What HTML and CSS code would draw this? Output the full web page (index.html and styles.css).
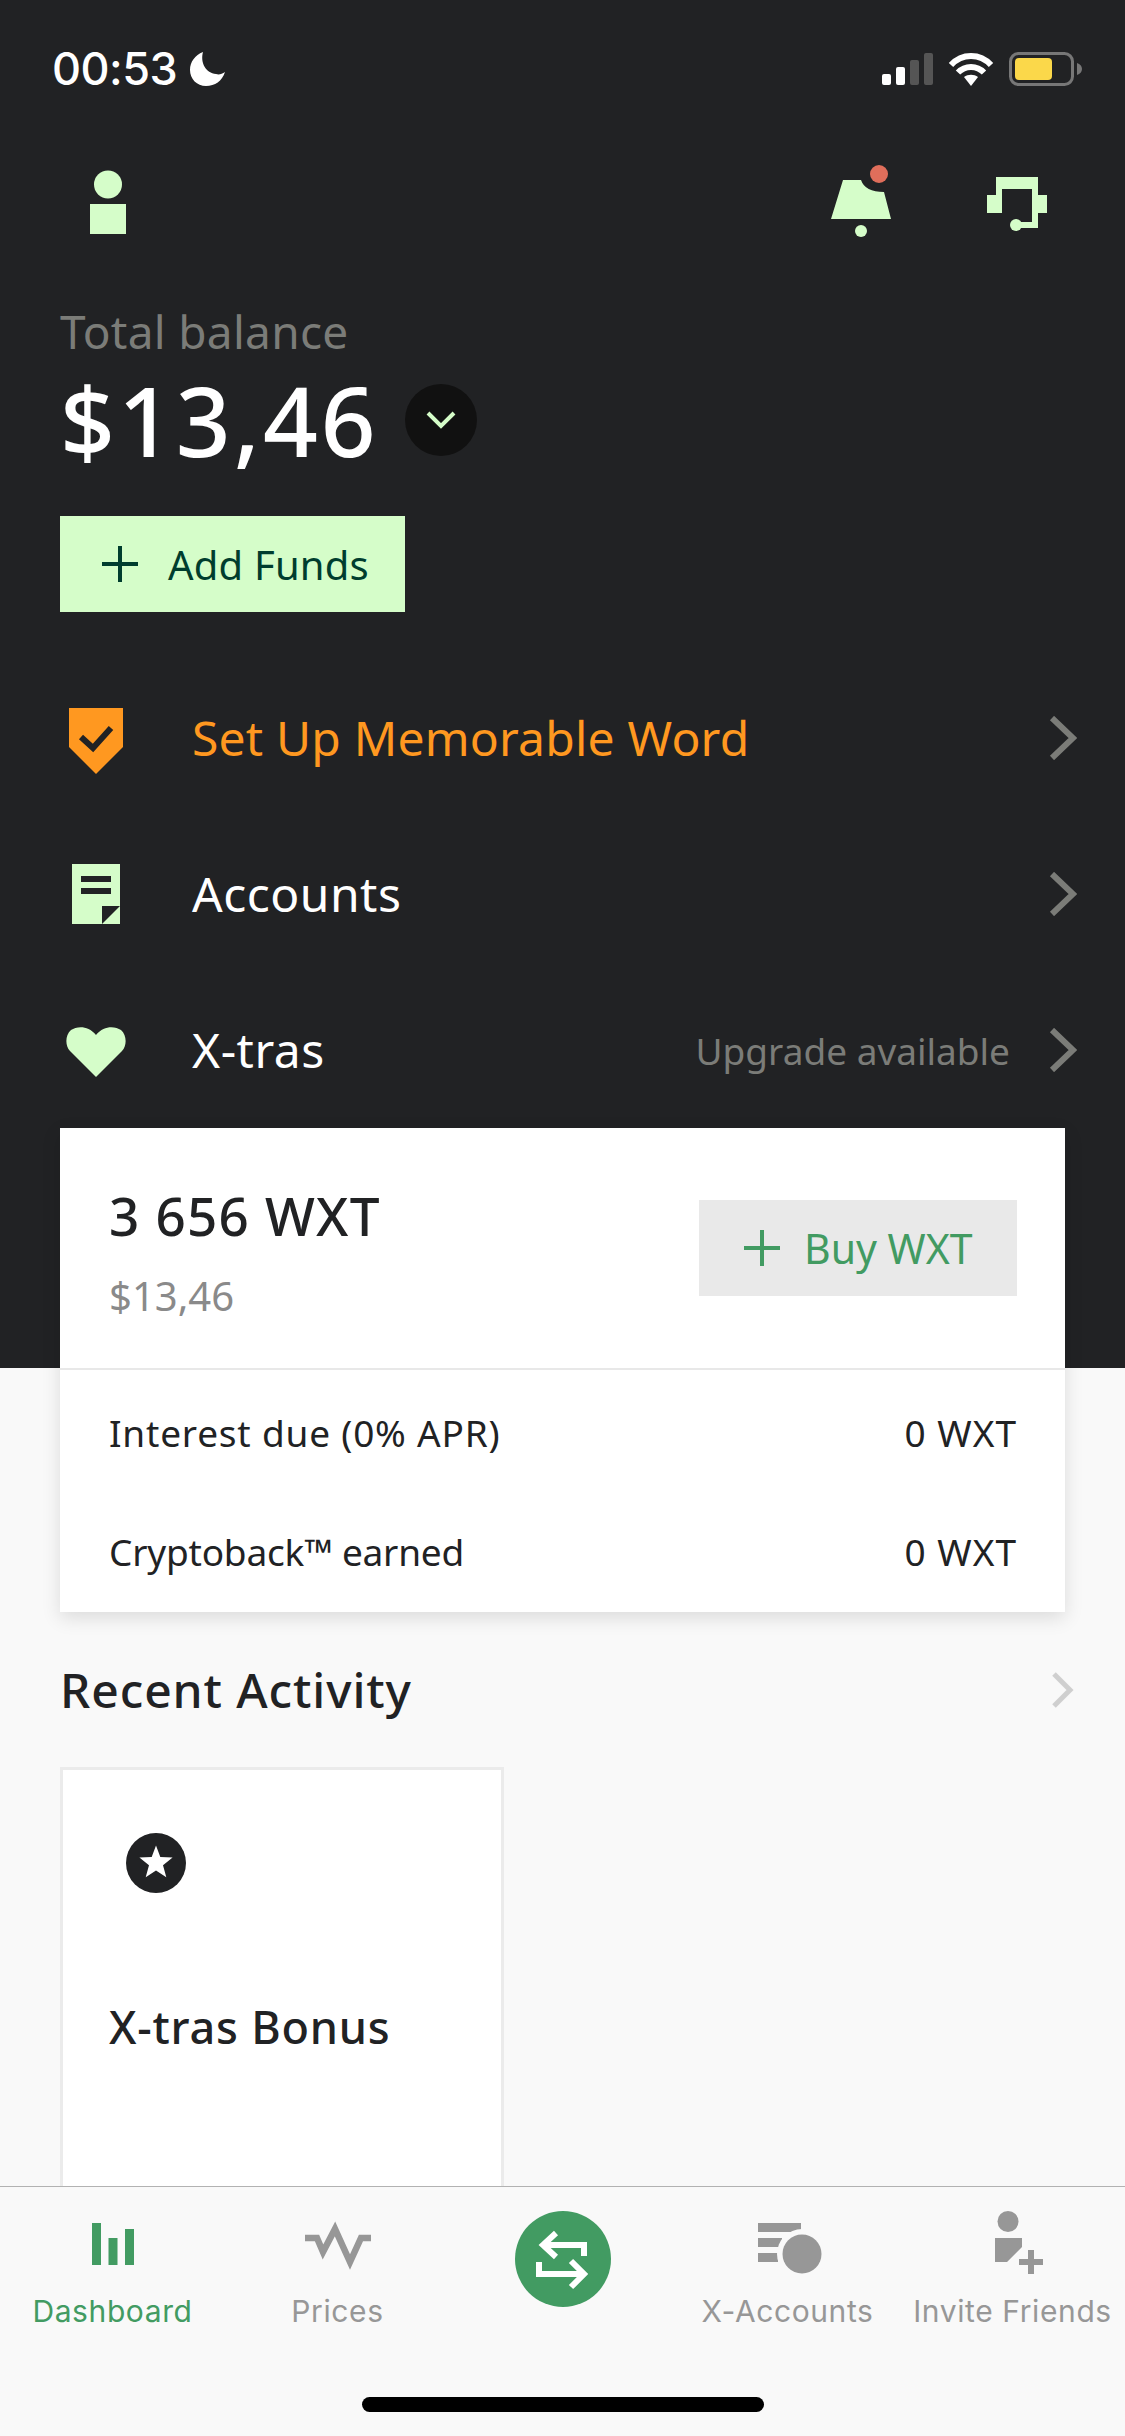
FILE: index.html
```html
<!DOCTYPE html>
<html lang="en">
<head>
<meta charset="utf-8">
<title>Dashboard</title>
<link rel="stylesheet" href="styles.css">
</head>
<body>
<div class="screen">
  <main class="content">
    <section class="hero">
      <div class="status">
        <div class="status-left">
          <span class="clock">00:53</span>
          <svg class="moon" viewBox="0 0 36 34"><path d="M13 0C5 3 0 10 0 18c0 9 7 16 16 16 9 0 16-5 19-14-3 2-6 3-9 2C16 21 10 11 13 0z"/></svg>
        </div>
        <div class="status-right">
          <svg class="signal" viewBox="882 53 51 32"><rect x="882" y="74" width="9" height="11" rx="2" fill="#fff"/><rect x="896" y="67" width="9" height="18" rx="2" fill="#fff"/><rect x="910" y="60" width="9" height="25" rx="2" fill="#555"/><rect x="924" y="53" width="9" height="32" rx="2" fill="#555"/></svg>
          <svg class="wifi" viewBox="0 0 46 33"><path d="M3 12C14 0 32 0 43 12M10 19.500C17 12 29 12 36 19.500" fill="none" stroke="#fff" stroke-width="6"/><path d="M23 33l-7-9c4-3 10-3 14 0z" fill="#fff"/></svg>
          <svg class="battery" viewBox="1009 52 73 34"><rect x="1010.500" y="53.500" width="62" height="31" rx="8" fill="none" stroke="#777" stroke-width="3"/><rect x="1015" y="58" width="37" height="22" rx="4" fill="#fbd84a"/><path d="M1077 63c3 1 5 3 5 6s-2 5-5 6z" fill="#777"/></svg>
        </div>
      </div>

      <nav class="topnav">
        <svg class="ic-person" viewBox="90 165 36 72"><circle cx="108" cy="184.500" r="14" fill="#d5fdc9"/><rect x="90" y="204" width="36" height="30" fill="#d5fdc9"/></svg>
        <div class="topnav-right">
          <svg class="ic-top" viewBox="831 165 60 72"><path d="M843 180H861Q865 192 884 192L891 219H831z" fill="#d5fdc9"/><circle cx="861" cy="231" r="6" fill="#d5fdc9"/><circle cx="879" cy="174" r="9" fill="#e06e5b"/></svg>
          <svg class="ic-top" viewBox="987 165 60 72"><path d="M996 177H1038V195H1047V213H1038V228H1016V222H1032V189H1002V213H987V195H996z" fill="#d5fdc9"/><circle cx="1016" cy="225" r="6" fill="#d5fdc9"/></svg>
        </div>
      </nav>

      <p class="total-label">Total balance</p>
      <div class="balance-row">
        <span class="balance">$13,46</span>
        <span class="balance-toggle">
          <svg class="ic-chev-down" viewBox="0 0 30 20"><path d="M2 3l13 13L28 3" fill="none" stroke="#d5fdc9" stroke-width="4"/></svg>
        </span>
      </div>

      <button class="add-funds">
        <svg class="ic-plus" viewBox="0 0 36 36"><path d="M16 0h4v16h16v4H20v16h-4V20H0v-4h16z" fill="#003d2e"/></svg>
        <span>Add Funds</span>
      </button>

      <ul class="menu">
        <li class="menu-row">
          <span class="menu-icon"><svg class="ic-shield" viewBox="0 0 54 66"><path d="M0 0H54V39L27 66 0 39z" fill="#ff9820"/><path d="M12 29l12 11 18-20" fill="none" stroke="#212224" stroke-width="6"/></svg></span>
          <span class="menu-text warn">Set Up Memorable Word</span>
          <svg class="ic-chev" viewBox="0 0 28 44"><path d="M3 2l21 20-21 20" fill="none" stroke="#7b7c78" stroke-width="6"/></svg>
        </li>
        <li class="menu-row">
          <span class="menu-icon"><svg class="ic-doc" viewBox="0 0 48 60"><rect width="48" height="60" fill="#d5fdc9"/><rect x="9" y="12" width="30" height="6" fill="#212224"/><rect x="9" y="24" width="30" height="6" fill="#212224"/><path d="M30 42H48L30 60z" fill="#212224"/></svg></span>
          <span class="menu-text">Accounts</span>
          <svg class="ic-chev" viewBox="0 0 28 44"><path d="M3 2l21 20-21 20" fill="none" stroke="#7b7c78" stroke-width="6"/></svg>
        </li>
        <li class="menu-row">
          <span class="menu-icon"><svg class="ic-heart" viewBox="0 0 60 50"><path d="M30 50L4 24C-1 19-1 8 5 3 11-1 22-2 30 8 38-2 49-1 55 3 61 8 61 19 56 24z" fill="#d5fdc9"/></svg></span>
          <span class="menu-text">X-tras</span>
          <span class="menu-note">Upgrade available</span>
          <svg class="ic-chev" viewBox="0 0 28 44"><path d="M3 2l21 20-21 20" fill="none" stroke="#7b7c78" stroke-width="6"/></svg>
        </li>
      </ul>
    </section>

    <section class="wallet">
      <div class="wallet-top">
        <div class="wallet-amounts">
          <div class="wallet-amount">3 656 WXT</div>
          <div class="wallet-fiat">$13,46</div>
        </div>
        <button class="buy">
          <svg class="ic-plus" viewBox="0 0 36 36"><path d="M16 0h4v16h16v4H20v16h-4V20H0v-4h16z" fill="#429b62"/></svg>
          <span>Buy WXT</span>
        </button>
      </div>
      <div class="wallet-bottom">
        <div class="wallet-line"><span class="wide">Interest due (0% APR)</span><span class="wxt">0 WXT</span></div>
        <div class="wallet-line"><span class="tight">Cryptoback™ earned</span><span class="wxt">0 WXT</span></div>
      </div>
    </section>

    <div class="recent-head">
      <h2>Recent Activity</h2>
      <svg class="ic-chev-light" viewBox="0 0 24 38"><path d="M3 3l16 16L3 35" fill="none" stroke="#cfcfcf" stroke-width="5"/></svg>
    </div>

    <article class="activity">
      <span class="star-badge"><svg viewBox="0 0 60 60"><circle cx="30" cy="30" r="30" fill="#212224"/><path d="M30 12.500L34.300 24 46.600 24.600 37 32.300 40.300 44.200 30 37.400 19.700 44.200 23 32.300 13.400 24.600 25.700 24z" fill="#fff"/></svg></span>
      <div class="activity-title">X-tras Bonus</div>
    </article>
  </main>

  <footer class="tabbar">
    <div class="tabs">
      <div class="tab active">
        <svg class="tab-ic w42" viewBox="91 2211 42 72"><path d="M91 2223h9v42h-9zM107.500 2238h9v27h-9zM124 2229h9v36h-9z" fill="#429b62"/></svg>
        <span>Dashboard</span>
      </div>
      <div class="tab">
        <svg class="tab-ic w66" viewBox="304 2211 66 72"><path d="M304 2238H316L322 2252 334 2229 349 2262 360 2238H370" fill="none" stroke="#979797" stroke-width="6.500"/></svg>
        <span>Prices</span>
      </div>
      <div class="tab">
        <span class="exchange"><svg viewBox="514 2211 96 96"><circle cx="562" cy="2259" r="48" fill="#429b62"/><path d="M555 2233L542 2245 555 2257M542 2245H583V2256M538 2262V2274H583M570 2261L583 2274 570 2287" fill="none" stroke="#fff" stroke-width="6"/></svg></span>
      </div>
      <div class="tab">
        <svg class="tab-ic w74" viewBox="750 2211 74 72"><path d="M757 2223h43v9h-43zM757 2238h24v9h-24zM757 2253h20v9h-20z" fill="#979797"/><circle cx="801" cy="2254" r="25" fill="#f9f9f9"/><circle cx="801" cy="2254" r="19.500" fill="#979797"/></svg>
        <span>X-Accounts</span>
      </div>
      <div class="tab">
        <svg class="tab-ic w60" viewBox="982 2211 60 72"><circle cx="1007" cy="2221.500" r="10.500" fill="#979797"/><path d="M994 2238H1021V2247L1006 2262H994zM1027 2250h6v9h9v6h-9v9h-6v-9h-9v-6h9z" fill="#979797"/></svg>
        <span>Invite Friends</span>
      </div>
    </div>
    <div class="home-bar"></div>
  </footer>
</div>
</body>
</html>
```
FILE: styles.css
```css
* { box-sizing: border-box; }
html, body { margin: 0; padding: 0; }
body { background: #f9f9f9; font-family: "Noto Sans", "Open Sans", sans-serif; color: #212224; }
ul { list-style: none; margin: 0; padding: 0; }
p, h2 { margin: 0; }
button { border: 0; font: inherit; cursor: pointer; }
svg { display: block; flex: none; }

.screen { width: 1125px; height: 2436px; display: flex; flex-direction: column; overflow: hidden; }
.content { flex: 1; min-height: 0; overflow: hidden; display: flex; flex-direction: column; }

/* hero */
.hero { background: #212224; height: 1368px; flex: none; }
.status { height: 138px; display: flex; align-items: center; justify-content: space-between; padding: 0 43px 0 52px; }
.status-left { display: flex; align-items: center; gap: 13px; }
.clock { font-family: Inter, sans-serif; font-size: 45px; font-weight: 500; color: #fff; line-height: 50px; letter-spacing: -0.5px; }
.moon { width: 36px; height: 34px; fill: #fff; }
.status-right { display: flex; align-items: center; gap: 15px; }
.signal { width: 51px; height: 32px; }
.wifi { width: 46px; height: 33px; }
.battery { width: 73px; height: 34px; }

.topnav { display: flex; justify-content: space-between; padding: 27px 78px 0 90px; }
.ic-person { width: 36px; height: 72px; }
.topnav-right { display: flex; gap: 96px; }
.ic-top { width: 60px; height: 72px; }

.total-label { margin: 64px 0 0 60px; font-size: 46px; line-height: 60px; color: #7b7c78; letter-spacing: 0.3px; }
.balance-row { display: flex; align-items: center; gap: 26px; margin: 11px 0 48px 60px; height: 96px; }
.balance { font-size: 96px; line-height: 96px; color: #fff; font-weight: 500; letter-spacing: 3px; }
.balance-toggle { width: 72px; height: 72px; border-radius: 50%; background: #111; display: flex; align-items: center; justify-content: center; }
.ic-chev-down { width: 30px; height: 20px; }

.add-funds { display: flex; align-items: center; gap: 30px; width: 345px; height: 96px; margin-left: 60px; padding: 0 0 0 42px; background: #d5fdc9; color: #003d2e; font-size: 40px; letter-spacing: 0.2px; }
.ic-plus { width: 36px; height: 36px; }

.menu { margin-top: 48px; }
.menu-row { display: flex; align-items: center; height: 156px; padding: 0 48px 0 60px; }
.menu-icon { width: 72px; margin-right: 60px; display: flex; justify-content: center; }
.menu-text { flex: 1; font-size: 48px; color: #fff; line-height: 60px; letter-spacing: 0.5px; }
.menu-text.warn { color: #ff9820; letter-spacing: 0.2px; }
.menu-note { font-size: 37px; color: #7b7c78; margin-right: 39px; }
.ic-shield { width: 54px; height: 66px; margin-top: 6px; }
.ic-doc { width: 48px; height: 60px; }
.ic-heart { width: 60px; height: 50px; margin-top: 4px; }
.ic-chev { width: 28px; height: 44px; }

/* wallet card */
.wallet { flex: none; margin: -240px 60px 0; background: #fff; box-shadow: 0 6px 18px rgba(0,0,0,.12); position: relative; }
.wallet-top { height: 240px; display: flex; align-items: center; justify-content: space-between; padding: 0 48px 0 49px; }
.wallet-amounts { padding-top: 8px; }
.wallet-amount { font-size: 53px; line-height: 64px; font-weight: 500; letter-spacing: 1.2px; }
.wallet-fiat { margin-top: 24px; font-size: 40px; line-height: 48px; color: #8a8a8a; }
.buy { display: flex; align-items: center; gap: 24px; width: 318px; height: 96px; padding: 0 0 0 45px; background: #e9e9e9; color: #429b62; font-size: 41px; }
.wallet-bottom { border-top: 2px solid #e8e8e8; padding: 3px 48px 1px 49px; }
.wallet-line { height: 119px; display: flex; align-items: center; justify-content: space-between; font-size: 37px; }
.wide { letter-spacing: 0.8px; }
.tight { letter-spacing: -0.2px; }
.wxt { letter-spacing: 1px; }

/* recent */
.recent-head { flex: none; display: flex; align-items: center; justify-content: space-between; margin-top: 48px; padding: 0 50px 0 60px; height: 60px; }
.recent-head h2 { font-size: 48px; font-weight: 500; line-height: 60px; letter-spacing: 0.9px; }
.ic-chev-light { width: 24px; height: 38px; }
.activity { flex: none; width: 444px; height: 600px; margin: 47px 0 0 60px; padding: 63px 0 0 46px; background: #fff; border: 3px solid #ebebeb; }
.star-badge { display: block; width: 60px; height: 60px; margin-left: 17px; }
.activity-title { margin-top: 104px; font-size: 45px; line-height: 60px; font-weight: 500; letter-spacing: 0.8px; }

/* tab bar */
.tabbar { flex: none; height: 250px; background: #f9f9f9; border-top: 1px solid #b2b2b2; }
.tabs { display: grid; grid-template-columns: repeat(5, 225px); height: 210px; padding-top: 24px; }
.tab { display: flex; flex-direction: column; align-items: center; gap: 8px; font-family: Inter, sans-serif; font-size: 30px; line-height: 40px; color: #979797; white-space: nowrap; letter-spacing: 0.6px; }
.tab.active { color: #429b62; }
.tab-ic { height: 72px; }
.w42 { width: 42px; }
.w66 { width: 66px; }
.w74 { width: 74px; }
.w60 { width: 60px; }
.exchange { display: block; width: 96px; height: 96px; }
.home-bar { width: 402px; height: 15px; margin: 0 auto; background: #000; border-radius: 8px; }
```
